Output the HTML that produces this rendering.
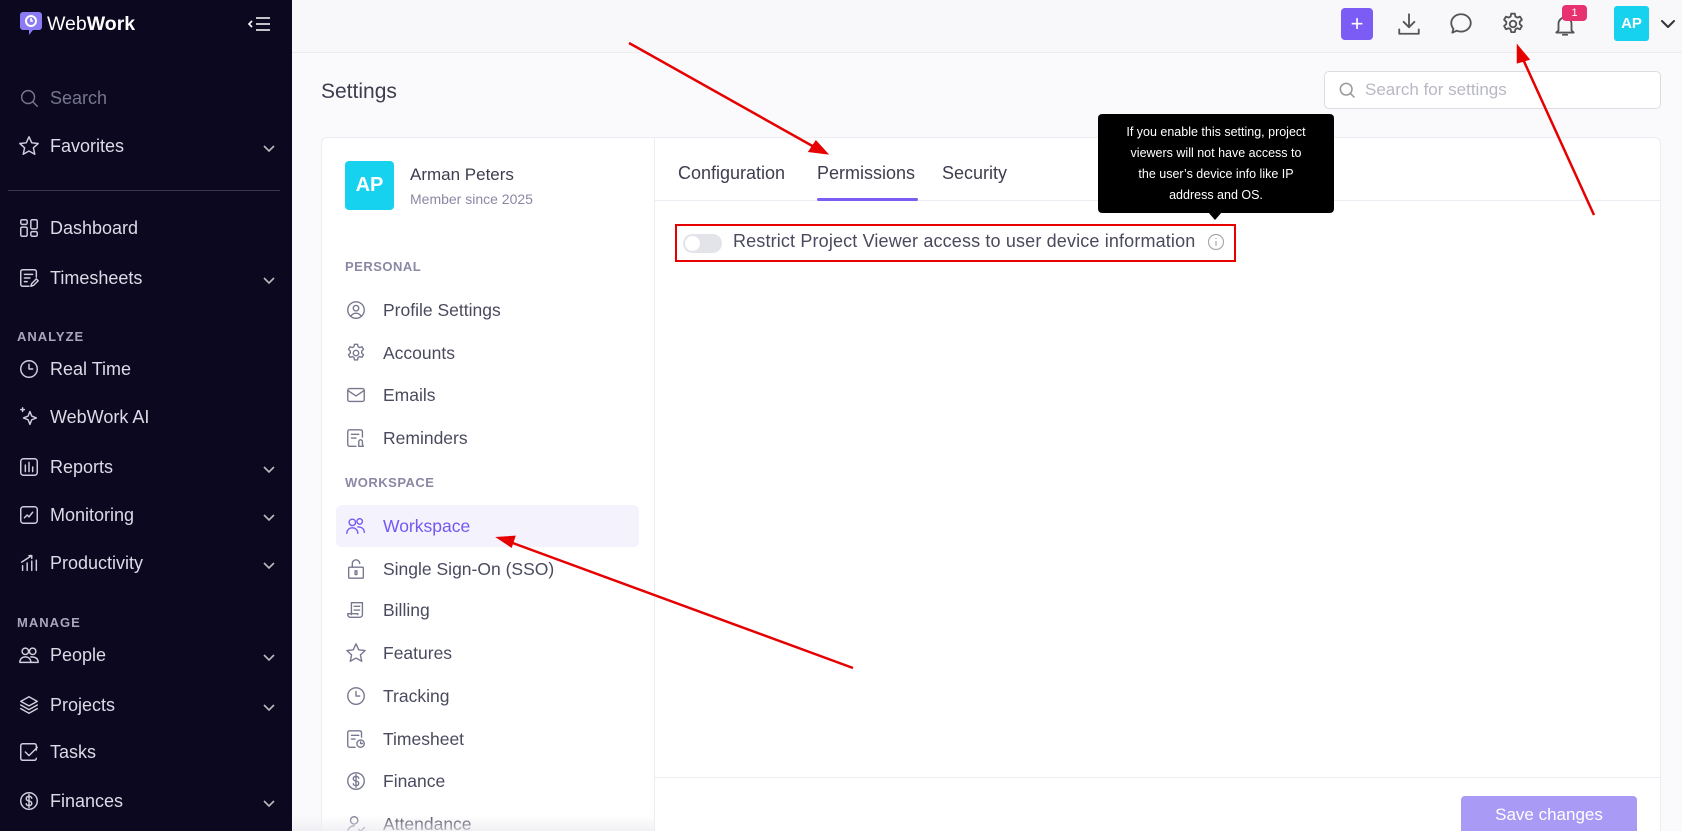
<!DOCTYPE html>
<html style="overflow:hidden;width:1682px;height:831px"><head><meta charset="utf-8"><style>
*{margin:0;padding:0;box-sizing:border-box}
body{width:1682px;height:831px;overflow:hidden;font-family:"Liberation Sans",sans-serif;background:#fafafc;position:relative}
.a{position:absolute}
#sb{left:0;top:0;width:292px;height:831px;background:#0b0820;color:#d9d8e4}
.si{position:absolute;left:18px;font-size:18px;display:flex;align-items:center;height:24px;color:#dcdbe6}
.si svg{width:22px;height:22px;margin-right:10px;stroke:#cfcedc;fill:none;stroke-width:1.6;stroke-linecap:round;stroke-linejoin:round}
.chev{position:absolute;left:262px;width:14px;height:14px;stroke:#bbb;fill:none;stroke-width:1.6}
.sec{position:absolute;left:17px;font-size:13px;font-weight:bold;letter-spacing:1px;color:#a9a7bb}
.mi{position:absolute;left:345px;font-size:17.5px;color:#4a4a5e;display:flex;align-items:center;height:24px}
.mi svg{width:22px;height:22px;margin-right:16px;stroke:#777790;fill:none;stroke-width:1.5;stroke-linecap:round;stroke-linejoin:round}
.ms{position:absolute;left:345px;font-size:13px;font-weight:bold;color:#8a88a4;letter-spacing:.5px}
.tb svg{stroke:#555;fill:none;stroke-width:1.7;stroke-linecap:round;stroke-linejoin:round}
</style></head><body>
<div id="sb" class="a">
 <svg class="a" style="left:19px;top:10px" width="24" height="26" viewBox="0 0 24 26"><path d="M4 2h16a3 3 0 0 1 3 3v12a3 3 0 0 1-3 3h-6l-4 5v-5H4a3 3 0 0 1-3-3V5a3 3 0 0 1 3-3z" fill="#8b7cf6"/><circle cx="12" cy="11" r="5" fill="none" stroke="#fff" stroke-width="2"/><path d="M12 8v3h2" stroke="#fff" stroke-width="1.6" fill="none"/></svg>
 <div class="a" style="left:47px;top:13px;font-size:19.5px;color:#fff">Web<b>Work</b></div>
 <svg class="a" style="left:247px;top:15px" width="24" height="18" viewBox="0 0 24 18" stroke="#fff" fill="none" stroke-width="1.6"><path d="M9 3h14M9 9h14M9 15h14M5 6L2 9l3 3"/></svg>
 <div class="si" style="top:86px;color:#777590"><svg viewBox="0 0 24 24" style="stroke:#777590"><circle cx="11" cy="11" r="7"/><path d="M16 16l5 5"/></svg>Search</div>
 <div class="si" style="top:134px"><svg viewBox="0 0 24 24"><path d="M12 2l3 6.5 7 .8-5.2 4.7 1.5 7L12 17.5 5.7 21l1.5-7L2 9.3l7-.8z"/></svg>Favorites</div>
 <svg class="chev" style="top:141px" viewBox="0 0 14 14"><path d="M2 5l5 5 5-5"/></svg>
 <div class="a" style="left:8px;top:190px;width:272px;height:1px;background:#3a3752"></div>
 <div class="si" style="top:216px"><svg viewBox="0 0 24 24"><rect x="3" y="3" width="7" height="5" rx="1.5"/><rect x="3" y="11" width="7" height="10" rx="1.5"/><rect x="14" y="3" width="7" height="10" rx="1.5"/><rect x="14" y="16" width="7" height="5" rx="1.5"/></svg>Dashboard</div>
 <div class="si" style="top:266px"><svg viewBox="0 0 24 24"><path d="M20 11V5a2 2 0 0 0-2-2H5a2 2 0 0 0-2 2v14a2 2 0 0 0 2 2h7M7 8h9M7 12h6M7 16h3M14 21l1-3 5-5 2 2-5 5z"/></svg>Timesheets</div>
 <svg class="chev" style="top:273px" viewBox="0 0 14 14"><path d="M2 5l5 5 5-5"/></svg>
 <div class="sec" style="top:329px">ANALYZE</div>
 <div class="si" style="top:357px"><svg viewBox="0 0 24 24"><circle cx="12" cy="12" r="9"/><path d="M12 7v5h4"/></svg>Real Time</div>
 <div class="si" style="top:405px"><svg viewBox="0 0 24 24"><path d="M13 6l2 5 5 2-5 2-2 5-2-5-5-2 5-2zM5 2v4M3 4h4"/></svg>WebWork AI</div>
 <div class="si" style="top:455px"><svg viewBox="0 0 24 24"><rect x="3" y="3" width="18" height="18" rx="3"/><path d="M8 10v7M12 7v10M16 12v5"/></svg>Reports</div>
 <svg class="chev" style="top:462px" viewBox="0 0 14 14"><path d="M2 5l5 5 5-5"/></svg>
 <div class="si" style="top:503px"><svg viewBox="0 0 24 24"><rect x="3" y="3" width="18" height="18" rx="3"/><path d="M7 15l3-3 2 2 4-5"/></svg>Monitoring</div>
 <svg class="chev" style="top:510px" viewBox="0 0 14 14"><path d="M2 5l5 5 5-5"/></svg>
 <div class="si" style="top:551px"><svg viewBox="0 0 24 24"><path d="M5 20v-5M10 20v-8M15 20v-10M20 20V9M4 11l11-7M12 4h3v3"/></svg>Productivity</div>
 <svg class="chev" style="top:558px" viewBox="0 0 14 14"><path d="M2 5l5 5 5-5"/></svg>
 <div class="sec" style="top:615px">MANAGE</div>
 <div class="si" style="top:643px"><svg viewBox="0 0 24 24"><circle cx="8" cy="8" r="3.5"/><circle cx="16" cy="8" r="3.5"/><path d="M2 20c0-4 3-6 6-6s6 2 6 6zM14 14c4 0 8 1 8 6h-8"/></svg>People</div>
 <svg class="chev" style="top:650px" viewBox="0 0 14 14"><path d="M2 5l5 5 5-5"/></svg>
 <div class="si" style="top:693px"><svg viewBox="0 0 24 24"><path d="M12 3l9 5-9 5-9-5zM3 12l9 5 9-5M3 16l9 5 9-5"/></svg>Projects</div>
 <svg class="chev" style="top:700px" viewBox="0 0 14 14"><path d="M2 5l5 5 5-5"/></svg>
 <div class="si" style="top:740px"><svg viewBox="0 0 24 24"><path d="M20 10V5a2 2 0 0 0-2-2H5a2 2 0 0 0-2 2v14a2 2 0 0 0 2 2h13a2 2 0 0 0 2-2M8 12l4 4 9-9"/></svg>Tasks</div>
 <div class="si" style="top:789px"><svg viewBox="0 0 24 24"><circle cx="12" cy="12" r="9"/><path d="M15 9c0-1-1-2-3-2s-3 1-3 2.5S10 11.5 12 12s3 1 3 2.5-1 2.5-3 2.5-3-1-3-2M12 5v14"/></svg>Finances</div>
 <svg class="chev" style="top:796px" viewBox="0 0 14 14"><path d="M2 5l5 5 5-5"/></svg>
</div>

<div class="a" style="left:292px;top:0;width:1390px;height:53px;background:#f8f8fb;border-bottom:1px solid #ebebf0"></div>
<div class="a" style="left:1341px;top:8px;width:32px;height:32px;background:#7b5cf5;border-radius:4px;color:#fff;font-size:22px;text-align:center;line-height:31px">+</div>
<div class="tb">
<svg class="a" style="left:1396px;top:11px" width="26" height="26" viewBox="0 0 24 24"><path d="M12 3v12M7 10l5 5 5-5M3 17v4h18v-4"/></svg>
<svg class="a" style="left:1448px;top:11px" width="26" height="26" viewBox="0 0 24 24"><path d="M12 3c5 0 9 3.5 9 8s-4 8-9 8c-1.5 0-3-.3-4-.8L4 20l1-3.5C3.8 15 3 13 3 11c0-4.5 4-8 9-8z"/></svg>
<svg class="a" style="left:1500px;top:11px" width="26" height="26" viewBox="0 0 24 24"><circle cx="12" cy="12" r="3"/><path d="M10.3 2.5h3.4l.5 2.6 1.8 1 2.5-.9 1.7 2.9-2 1.8v2.2l2 1.8-1.7 2.9-2.5-.9-1.8 1-.5 2.6h-3.4l-.5-2.6-1.8-1-2.5.9-1.7-2.9 2-1.8v-2.2l-2-1.8 1.7-2.9 2.5.9 1.8-1z"/></svg>
<svg class="a" style="left:1552px;top:12px" width="26" height="26" viewBox="0 0 24 24"><path d="M6 17V11a6 6 0 0 1 12 0v6l2 2H4zM10 21h4"/></svg>
<svg class="a" style="left:1660px;top:18px" width="16" height="12" viewBox="0 0 16 12"><path d="M2 3l6 6 6-6" stroke="#333" stroke-width="2"/></svg>
</div>
<div class="a" style="left:1562px;top:5px;width:25px;height:16px;background:#e8316f;border-radius:4px;color:#fff;font-size:11px;text-align:center;line-height:16px">1</div>
<div class="a" style="left:1614px;top:6px;width:35px;height:35px;background:#17d2ee;border-radius:3px;color:#fff;font-weight:bold;font-size:15px;text-align:center;line-height:35px">AP</div>

<div class="a" style="left:321px;top:80px;font-size:21px;color:#3d3d4f">Settings</div>
<div class="a" style="left:1324px;top:71px;width:337px;height:38px;border:1px solid #dcdce3;border-radius:5px;background:#fff"></div>
<svg class="a" style="left:1337px;top:80px" width="20" height="20" viewBox="0 0 24 24" stroke="#999" fill="none" stroke-width="1.8"><circle cx="11" cy="11" r="7"/><path d="M16 16l5 5"/></svg>
<div class="a" style="left:1365px;top:80px;font-size:17px;color:#b8b8c4">Search for settings</div>

<div class="a" style="left:321px;top:137px;width:1340px;height:694px;background:#fff;border:1px solid #ececf2;border-bottom:none;border-radius:6px 6px 0 0"></div>
<div class="a" style="left:654px;top:138px;width:1px;height:693px;background:#ececf2"></div>
<div class="a" style="left:655px;top:200px;width:1005px;height:1px;background:#ececf2"></div>
<div class="a" style="left:655px;top:777px;width:1005px;height:1px;background:#ececf2"></div>
<div class="a" style="left:345px;top:161px;width:49px;height:49px;background:#17d2ee;border-radius:4px;color:#fff;font-weight:bold;font-size:20px;text-align:center;line-height:49px">AP</div>
<div class="a" style="left:410px;top:165px;font-size:17px;color:#3d3d4f">Arman Peters</div>
<div class="a" style="left:410px;top:191px;font-size:14px;color:#8a88a4">Member since 2025</div>

<div class="ms" style="top:259px">PERSONAL</div>
<div class="mi" style="top:298px"><svg viewBox="0 0 24 24"><circle cx="12" cy="12" r="9"/><circle cx="12" cy="10" r="3"/><path d="M6.5 18.5c1.5-2 3.5-3 5.5-3s4 1 5.5 3"/></svg>Profile Settings</div>
<div class="mi" style="top:341px"><svg viewBox="0 0 24 24"><circle cx="12" cy="12" r="3"/><path d="M10.3 2.5h3.4l.5 2.6 1.8 1 2.5-.9 1.7 2.9-2 1.8v2.2l2 1.8-1.7 2.9-2.5-.9-1.8 1-.5 2.6h-3.4l-.5-2.6-1.8-1-2.5.9-1.7-2.9 2-1.8v-2.2l-2-1.8 1.7-2.9 2.5.9 1.8-1z"/></svg>Accounts</div>
<div class="mi" style="top:383px"><svg viewBox="0 0 24 24"><rect x="3" y="5" width="18" height="14" rx="2"/><path d="M3 7l9 6 9-6"/></svg>Emails</div>
<div class="mi" style="top:426px"><svg viewBox="0 0 24 24"><path d="M19 11V5a2 2 0 0 0-2-2H5a2 2 0 0 0-2 2v14a2 2 0 0 0 2 2h7M7 8h8M7 12h5M15 21h5l-1-2v-3a2 2 0 0 0-4 0v3z"/></svg>Reminders</div>
<div class="ms" style="top:475px">WORKSPACE</div>
<div class="a" style="left:336px;top:505px;width:303px;height:42px;background:#f3f2fd;border-radius:6px"></div>
<div class="mi" style="top:514px;color:#7558f0"><svg viewBox="0 0 24 24" style="stroke:#7558f0"><circle cx="8" cy="8" r="3.5"/><circle cx="16" cy="7" r="3"/><path d="M2 20c0-4 3-6 6-6s6 2 6 6M14 13c4 0 7 2 7 6"/></svg>Workspace</div>
<div class="mi" style="top:557px"><svg viewBox="0 0 24 24"><rect x="4" y="10" width="16" height="12" rx="1"/><path d="M8 10V6a4 4 0 0 1 8 0M11 14h2v4h-2z"/></svg>Single Sign-On (SSO)</div>
<div class="mi" style="top:598px"><svg viewBox="0 0 24 24"><path d="M7 17V4h12v13a3 3 0 0 1-3 3H6a3 3 0 0 1-3-3v-1h11v1M10 8h6M10 12h6"/></svg>Billing</div>
<div class="mi" style="top:641px"><svg viewBox="0 0 24 24"><path d="M12 2l3 6.5 7 .8-5.2 4.7 1.5 7L12 17.5 5.7 21l1.5-7L2 9.3l7-.8z"/></svg>Features</div>
<div class="mi" style="top:684px"><svg viewBox="0 0 24 24"><circle cx="12" cy="12" r="9"/><path d="M12 7v5h4"/></svg>Tracking</div>
<div class="mi" style="top:727px"><svg viewBox="0 0 24 24"><path d="M18 10V5a2 2 0 0 0-2-2H5a2 2 0 0 0-2 2v14a2 2 0 0 0 2 2h6M7 8h8M7 12h4"/><circle cx="17" cy="17" r="4"/><path d="M17 15v2h2"/></svg>Timesheet</div>
<div class="mi" style="top:769px"><svg viewBox="0 0 24 24"><circle cx="12" cy="12" r="9"/><path d="M15 9c0-1-1-2-3-2s-3 1-3 2.5S10 11.5 12 12s3 1 3 2.5-1 2.5-3 2.5-3-1-3-2M12 5v14"/></svg>Finance</div>
<div class="mi" style="top:812px"><svg viewBox="0 0 24 24"><circle cx="10" cy="8" r="4"/><path d="M3 21c0-4 3-7 7-7M15 18l2 2 4-4"/></svg>Attendance</div>
<div class="a" style="left:293px;top:815px;width:362px;height:16px;background:linear-gradient(rgba(255,255,255,0),rgba(235,235,240,.7))"></div>

<div class="a" style="left:678px;top:163px;font-size:18px;color:#3d3d4f">Configuration</div>
<div class="a" style="left:817px;top:163px;font-size:18px;color:#3d3d4f">Permissions</div>
<div class="a" style="left:942px;top:163px;font-size:18px;color:#3d3d4f">Security</div>
<div class="a" style="left:817px;top:198px;width:101px;height:3px;background:#7b5cf5;border-radius:2px"></div>

<div class="a" style="left:675px;top:224px;width:561px;height:38px;border:2.5px solid #e60000"></div>
<div class="a" style="left:683px;top:234px;width:39px;height:19px;background:#e3e3ea;border-radius:10px"><div style="position:absolute;left:2px;top:2px;width:15px;height:15px;border-radius:50%;background:#fff"></div></div>
<div class="a" style="left:733px;top:231px;font-size:18px;color:#4a4a5e;letter-spacing:.15px">Restrict Project Viewer access to user device information</div>
<svg class="a" style="left:1207px;top:233px" width="18" height="18" viewBox="0 0 18 18" fill="none" stroke="#aaa" stroke-width="1.2"><circle cx="9" cy="9" r="7.5"/><path d="M9 8v5M9 5v1"/></svg>

<div class="a" style="left:1098px;top:114px;width:236px;height:99px;background:#000;border-radius:4px;color:#fff;font-size:12.5px;line-height:21px;text-align:center;padding-top:8px">If you enable this setting, project<br>viewers will not have access to<br>the user’s device info like IP<br>address and OS.</div>
<div class="a" style="left:1208px;top:212px;width:0;height:0;border-left:7px solid transparent;border-right:7px solid transparent;border-top:8px solid #000"></div>

<div class="a" style="left:1461px;top:796px;width:176px;height:35px;background:#a99af5;border-radius:4px 4px 0 0;color:#fff;font-size:17px;text-align:center;line-height:38px">Save changes</div>

<svg class="a" style="left:0;top:0" width="1682" height="831">
<g stroke="#e60000" stroke-width="2.5" fill="#e60000">
<line x1="629" y1="43" x2="816" y2="148"/><path d="M826 153l-16-2 6-9z"/>
<line x1="1594" y1="215" x2="1522" y2="57"/><path d="M1518 47l10 12-10 3z"/>
<line x1="853" y1="668" x2="510" y2="542"/><path d="M499 538l15-1-3 9z"/>
</g></svg>
</body></html>
